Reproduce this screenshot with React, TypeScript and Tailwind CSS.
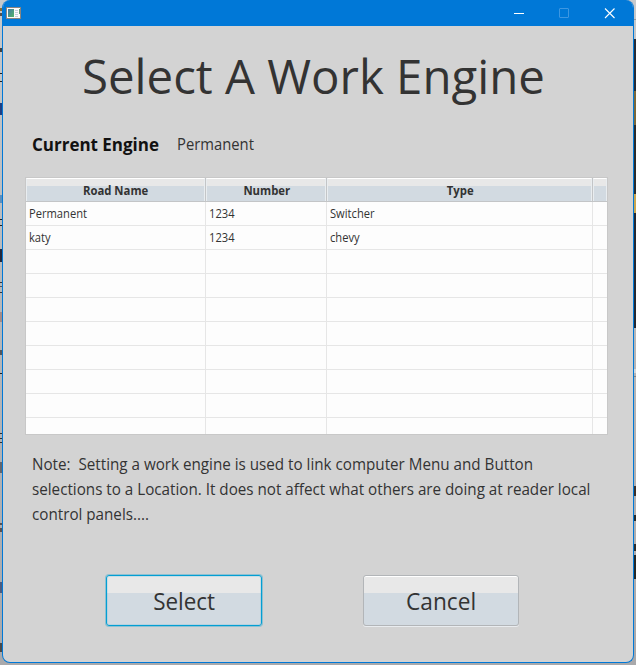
const columns = [
  { label: "Road Name", width: "w-[180px]" },
  { label: "Number", width: "w-[121px]" },
  { label: "Type", width: "w-[266px]" },
  { label: "", width: "w-[14px]" },
];

const rows = [
  ["Permanent", "1234", "Switcher", ""],
  ["katy", "1234", "chevy", ""],
  ...Array.from({ length: 8 }, () => ["", "", "", ""]),
];

const leftStrip = [
  { top: 8, height: 3, color: "#8a6a30" },
  { top: 13, height: 3, color: "#505050" },
  { top: 48, height: 4, color: "#404040" },
  { top: 73, height: 1, color: "#202020" },
  { top: 81, height: 1, color: "#202020" },
  { top: 103, height: 12, color: "#1f3f83" },
  { top: 195, height: 8, color: "#5b8fbe" },
  { top: 219, height: 1, color: "#202020" },
  { top: 225, height: 1, color: "#202020" },
  { top: 249, height: 13, color: "#22283c" },
  { top: 282, height: 1, color: "#35363a" },
  { top: 286, height: 1, color: "#55565a" },
  { top: 292, height: 1, color: "#35363a" },
  { top: 312, height: 10, color: "#a58b86" },
  { top: 350, height: 5, color: "#55565a" },
  { top: 373, height: 1, color: "#202020" },
  { top: 433, height: 1, color: "#303030" },
  { top: 438, height: 1, color: "#303030" },
  { top: 442, height: 1, color: "#303030" },
  { top: 462, height: 11, color: "#64666c" },
  { top: 523, height: 2, color: "#5a5050" },
  { top: 528, height: 4, color: "#5a5050" },
  { top: 582, height: 11, color: "#4b5c80" },
  { top: 643, height: 9, color: "#4a4a4a" },
];

const rightStrip = [
  { top: 19, height: 1, color: "#96989c" },
  { top: 39, height: 52, color: "#252b36" },
  { top: 91, height: 34, color: "#7a683a" },
  { top: 125, height: 69, color: "#292b2b" },
  { top: 194, height: 19, color: "#c9a650" },
  { top: 213, height: 115, color: "#222831" },
  { top: 369, height: 4, color: "#d4d6d8" },
  { top: 376, height: 1, color: "#808386" },
  { top: 486, height: 10, color: "#3a3029" },
  { top: 515, height: 6, color: "#262a2a" },
  { top: 544, height: 7, color: "#2c2c2b" },
  { top: 555, height: 24, color: "#242827" },
];

function Strip({ bars, side }: { bars: typeof leftStrip; side: string }) {
  return (
    <div className={`absolute top-0 h-full w-[3px] ${side}`}>
      {bars.map((b) => (
        <div key={b.top} className="absolute w-full" style={{ top: b.top, height: b.height, background: b.color }} />
      ))}
    </div>
  );
}

function AppIcon() {
  return (
    <svg width="15" height="12" viewBox="0 0 15 12" shapeRendering="crispEdges">
      <defs>
        <linearGradient id="pic" x1="0" y1="0" x2="1" y2="1">
          <stop offset="0" stopColor="#3f78a8" />
          <stop offset="1" stopColor="#53b567" />
        </linearGradient>
      </defs>
      <rect width="15" height="12" fill="#8a8580" />
      <rect x="1" y="1" width="13" height="10" fill="#fafafa" />
      <rect x="2" y="2" width="6" height="8" fill="url(#pic)" />
      <path d="M9 3.5h3M9 5.5h3M9 7.5h3M9 9.5h3" stroke="#c5cede" />
      <rect x="13" y="2" width="1" height="5" fill="#5c9a78" />
    </svg>
  );
}

function TitleBar() {
  return (
    <div className="flex h-[26px] items-start bg-[#0078d7] pl-[3px]">
      <div className="pt-[7px]">
        <AppIcon />
      </div>
      <svg className="ml-auto mr-[17px]" width="103" height="26" viewBox="0 0 103 26" fill="none">
        <path d="M1 13.5h10" stroke="#fff" />
        <rect x="46.5" y="8.5" width="9" height="9" rx="0.5" stroke="#3d97e2" />
        <path d="M92 8.5l9.500 9.500M101.500 8.500l-9.500 9.500" stroke="#fff" strokeWidth="1.1" />
      </svg>
    </div>
  );
}

function EngineTable() {
  return (
    <div className="h-[258px] w-[583px] overflow-hidden border border-[#c8c8c8] bg-[#fdfdfd]">
      <div className="flex h-6 border-b border-[#c3c5c7]">
        {columns.map((c, i) => (
          <div
            key={i}
            className={`${c.width} shrink-0 ${i < 3 ? "border-r border-[#c3c5c7]" : ""}`}
          >
            <div className="flex h-full items-center justify-center border-x border-t border-x-[#e9edf0] border-t-white bg-[linear-gradient(#e8e8e8_0,#e8e8e8_7px,#d2dae1_7px)] text-[12px] font-bold">
              <span className="scale-x-[0.943] pl-px pt-[2px]">{c.label}</span>
            </div>
          </div>
        ))}
      </div>
      {rows.map((r, i) => (
        <div key={i} className="flex h-6">
          {r.map((v, j) => (
            <div
              key={j}
              className={`${columns[j].width} shrink-0 border-b border-[#e6e6e6] pl-[3px] text-[12px] leading-6 ${j < 3 ? "border-r" : ""}`}
            >
              <span className="inline-block origin-left scale-x-[0.93]">{v}</span>
            </div>
          ))}
        </div>
      ))}
    </div>
  );
}

export default function App() {
  return (
    <div className="relative h-[665px] w-[636px] overflow-hidden bg-[linear-gradient(#c6c9cc_0,#b8b8b9_300px,#a9a9ab_660px)] font-['Open_Sans','Noto_Sans',sans-serif] text-[#333]">
      <Strip bars={leftStrip} side="left-0" />
      <Strip bars={rightStrip} side="right-0" />
      <div className="relative ml-[2px] flex h-[663px] w-[632px] flex-col overflow-hidden rounded-lg border border-t-0 border-[#0078d7] bg-[#d3d3d3]">
        <TitleBar />
        <h1 className="mt-[18px] h-[64px] whitespace-nowrap pl-[79px] text-[48px] leading-[64px]">
          <span className="inline-block origin-left scale-x-[0.987]">Select A Work Engine</span>
        </h1>
        <div className="mt-[22px] flex h-[28px] items-center whitespace-nowrap pl-[29px]">
          <span className="w-[145px] text-[18px] font-bold text-[#111]">
            <span className="inline-block origin-left scale-x-[0.943]">Current Engine</span>
          </span>
          <span className="inline-block origin-left scale-x-[0.925] text-[16px]">Permanent</span>
        </div>
        <div className="mt-[19px] pl-[22px]">
          <EngineTable />
        </div>
        <p className="ml-[29px] mt-[17px] origin-left scale-x-[0.95] whitespace-pre text-[16px] leading-[25px]">
          {"Note:  Setting a work engine is used to link computer Menu and Button\nselections to a Location. It does not affect what others are doing at reader local\ncontrol panels...."}
        </p>
        <div className="mt-[48px] flex pl-[103px] text-[24px]">
          <button className="h-[51px] w-[156px] rounded-[3px] border border-[#039ed3] bg-[linear-gradient(#e8e8e8_0,#e8e8e8_17px,#d2dae1_17px)] shadow-[0_0_0_1px_#039ed355,inset_0_0_0_1px_#039ed322]">
            <span className="inline-block scale-x-[0.935]">Select</span>
          </button>
          <button className="ml-[101px] h-[51px] w-[156px] rounded-[3px] border border-[#b2b5b8] bg-[linear-gradient(#e8e8e8_0,#e8e8e8_17px,#d2dae1_17px)] shadow-[0_1px_0_#e9ecef,inset_0_1px_0_#fff]">
            <span className="inline-block scale-x-[0.945]">Cancel</span>
          </button>
        </div>
      </div>
    </div>
  );
}
